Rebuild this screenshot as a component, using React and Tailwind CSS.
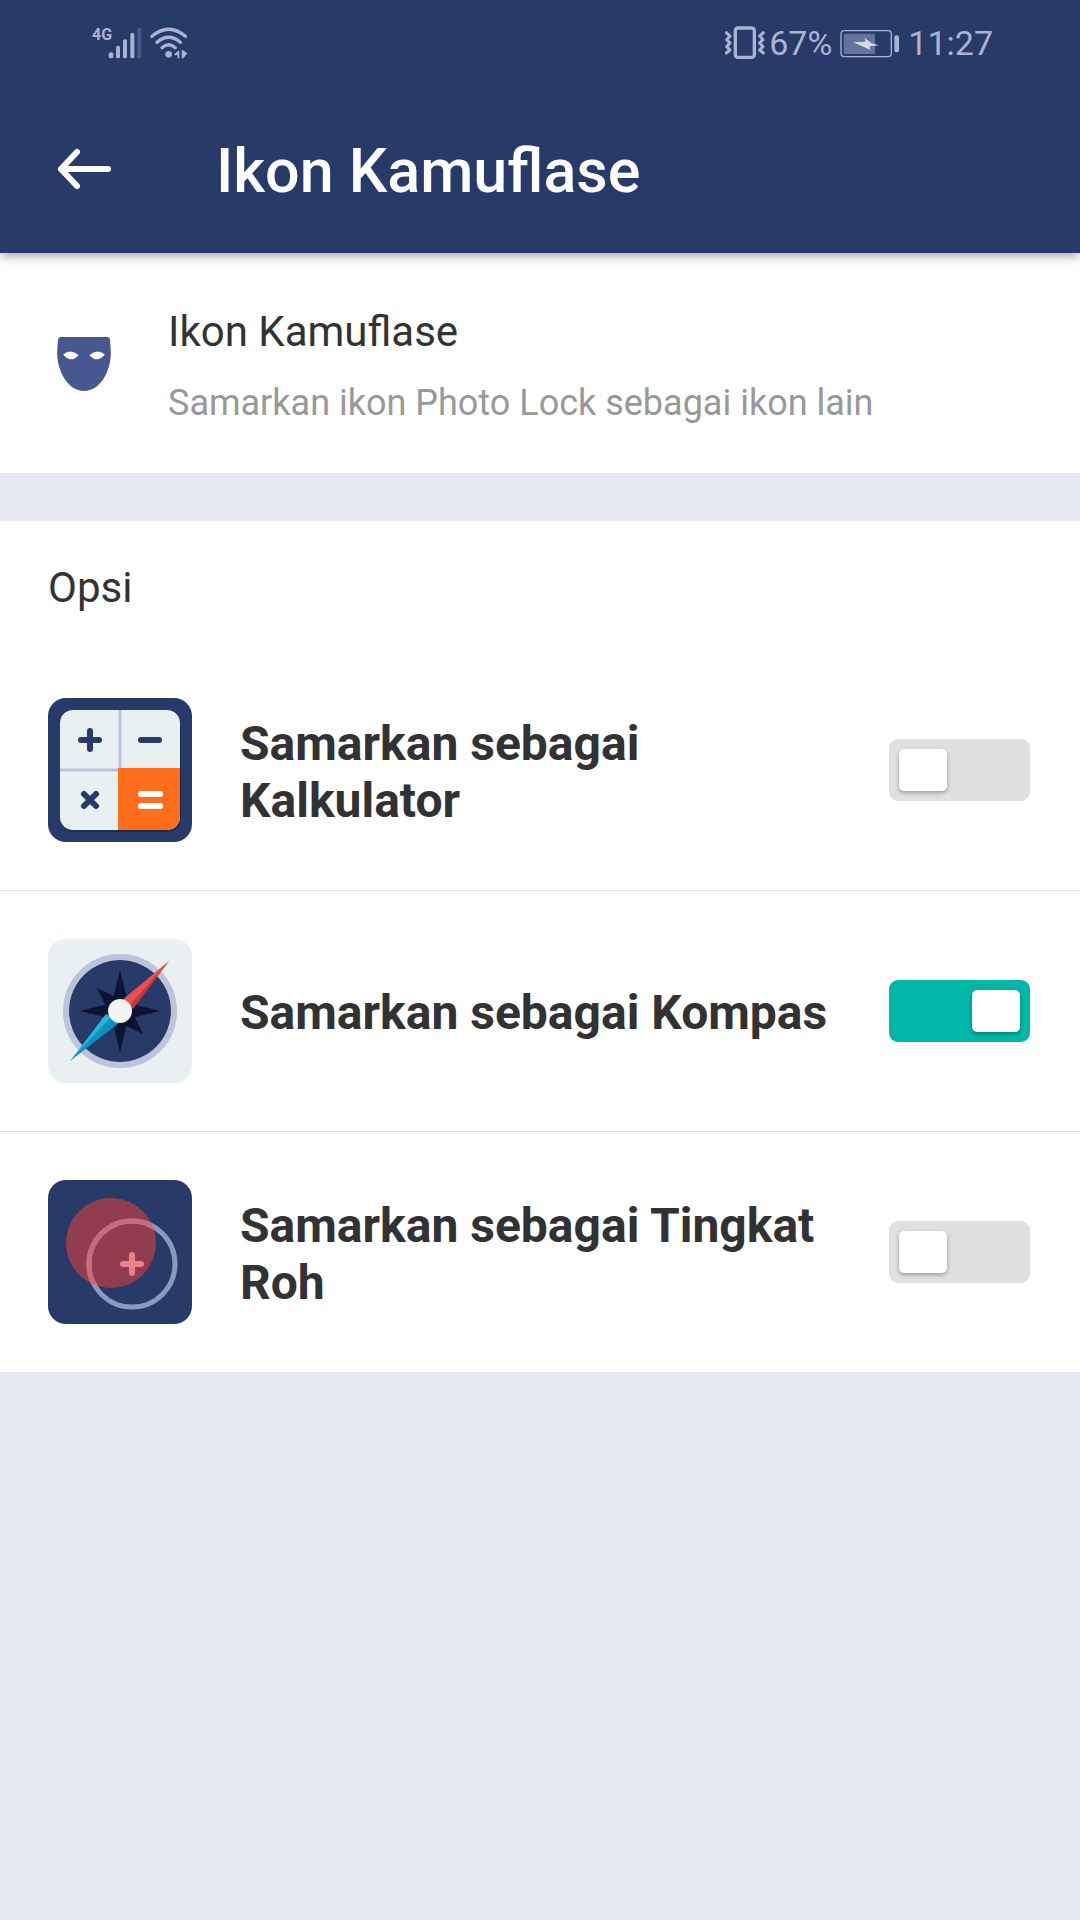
import React, { useState } from 'react';

function SignalIcon() {
  return (
    <svg viewBox="86 48 102 96" className="h-8 w-[34px]" fill="#a9b4d4" aria-hidden="true">
      <rect x="88" y="124" width="14" height="18" rx="6" />
      <rect x="110" y="104" width="12" height="38" rx="5" />
      <rect x="131" y="85" width="12" height="57" rx="5" />
      <rect x="153" y="66" width="12" height="76" rx="5" />
      <rect x="174" y="50" width="12" height="92" rx="4" fill="#475a88" />
    </svg>
  );
}

function WifiIcon() {
  return (
    <svg viewBox="213 48 114 96" className="h-8 w-[38px]" fill="none" stroke="#a9b4d4" aria-hidden="true">
      <g strokeWidth="10" strokeLinecap="round">
        <path d="M219 76 Q269 34 319 76" />
        <path d="M234 94 Q269 64 304 94" />
        <path d="M249 110 Q269 92 289 110" />
      </g>
      <g fill="#a9b4d4" stroke="none">
        <circle cx="269" cy="130" r="10" />
        <path d="M286 130 L297 119 H301 V142 H296 V133 H286 Z" />
        <path d="M308 118 H312 L325 127 L313 142 H308 Z" />
      </g>
    </svg>
  );
}

function VibrateIcon() {
  return (
    <svg viewBox="38 46 123 99" className="h-[33px] w-[41px]" fill="none" stroke="#a9b4d4" aria-hidden="true">
      <rect x="72" y="52" width="57" height="88" rx="8" strokeWidth="10" />
      <g strokeWidth="9" strokeLinejoin="round" strokeLinecap="round">
        <path d="M45 66 L56 76 L46 87 L56 97 L46 108 L56 118 L45 127" />
        <path d="M156 66 L145 76 L155 87 L145 97 L155 108 L145 118 L156 127" />
      </g>
    </svg>
  );
}

function BatteryIcon() {
  return (
    <svg viewBox="391 50 180 90" className="h-[30px] w-[60px]" aria-hidden="true">
      <rect x="394" y="58" width="151" height="78" rx="10" fill="none" stroke="#a9b4d4" strokeWidth="4" />
      <rect x="402" y="67" width="94" height="61" rx="4" fill="#64739b" />
      <rect x="554" y="72" width="14" height="51" rx="6" fill="#a9b4d4" />
      <path d="M430 93 L468 91 L464 79 L486 96 L508 102 L480 105 L482 116 L456 104 Z" fill="#d3daea" />
    </svg>
  );
}

function BackIcon() {
  return (
    <svg
      viewBox="0 0 54 42"
      className="h-[42px] w-[54px]"
      fill="none"
      stroke="#fff"
      strokeWidth="6"
      strokeLinecap="round"
      strokeLinejoin="round"
      aria-hidden="true"
    >
      <path d="M51 21 H4 M20 4 L4 21 L20 38" />
    </svg>
  );
}

function MaskIcon() {
  return (
    <svg viewBox="51 110 162 163" className="size-[54px] shrink-0" aria-hidden="true">
      <path
        d="M62 110 H203 Q209 110 210 117 Q212 133 213 157 C213 215 180 273 132 273 C84 273 51 215 51 157 Q52 133 54 117 Q55 110 62 110 Z"
        fill="#47578f"
      />
      <path d="M69 163 Q92 144 116 165 Q92 191 69 163 Z" fill="#fff" />
      <path d="M195 163 Q172 144 148 165 Q172 191 195 163 Z" fill="#fff" />
    </svg>
  );
}

function CalculatorIcon() {
  return (
    <svg viewBox="0 0 144 144" className="size-36 shrink-0" aria-hidden="true">
      <rect width="144" height="144" rx="18" fill="#273a68" />
      <rect x="13" y="14" width="120" height="120" rx="13" fill="#1b2c54" />
      <rect x="12" y="12" width="120" height="120" rx="13" fill="#e9f0f2" />
      <path d="M72 12 V72 M12 72 H72" stroke="#bcc3db" strokeWidth="3" />
      <path d="M70 70 H132 V119 A13 13 0 0 1 119 132 H70 Z" fill="#ff6e1c" />
      <g stroke="#273a68" strokeWidth="6" strokeLinecap="round">
        <path d="M33 42 H51 M42 33 V51" />
        <path d="M93 42 H111" />
        <path d="M36 96 L48 108 M48 96 L36 108" />
      </g>
      <g stroke="#fff" strokeWidth="6" strokeLinecap="round">
        <path d="M93 96 H112 M93 108 H112" />
      </g>
    </svg>
  );
}

function CompassIcon() {
  return (
    <svg viewBox="0 0 144 144" className="size-36 shrink-0" aria-hidden="true">
      <rect width="144" height="144" rx="18" fill="#e9f0f2" />
      <circle cx="72" cy="72" r="54" fill="none" stroke="#bcc3db" strokeWidth="6" />
      <circle cx="72" cy="72" r="51" fill="#273a68" />
      <g fill="#0b1533">
        <path d="M72 31 L80 64 L112 72 L80 80 L72 113 L64 80 L32 72 L64 64 Z" />
        <path d="M49 49 L76 62 L82 68 L95 95 L68 82 L62 76 Z" />
      </g>
      <path d="M121 22 L73 62 L79 67 Z" fill="#e9504f" />
      <path d="M121 22 L77 65 L85 70 Z" fill="#c2393d" />
      <path d="M121 22 L74 63 L81 67 Z" fill="#e9504f" />
      <path d="M22 122 L58 75 L66 80 Z" fill="#25b4dd" />
      <path d="M22 122 L63 78 L71 84 Z" fill="#0f8fbd" />
      <circle cx="72" cy="72" r="12" fill="#f1f3f5" />
    </svg>
  );
}

function SpiritLevelIcon() {
  return (
    <svg viewBox="0 0 144 144" className="size-36 shrink-0" aria-hidden="true">
      <defs>
        <clipPath id="bubble">
          <circle cx="63" cy="63" r="45" />
        </clipPath>
      </defs>
      <rect width="144" height="144" rx="18" fill="#273a68" />
      <circle cx="63" cy="63" r="45" fill="#923c50" />
      <circle cx="84" cy="84" r="43" fill="none" stroke="#8c99bf" strokeWidth="5" />
      <g clipPath="url(#bubble)">
        <circle cx="84" cy="84" r="43" fill="none" stroke="#cd6a79" strokeWidth="5" />
      </g>
      <path d="M75 84 H93 M84 75 V93" stroke="#ec8189" strokeWidth="6" strokeLinecap="round" />
    </svg>
  );
}

const options = [
  { id: 'kalkulator', label: 'Samarkan sebagai Kalkulator', Icon: CalculatorIcon },
  { id: 'kompas', label: 'Samarkan sebagai Kompas', Icon: CompassIcon },
  { id: 'tingkat-roh', label: 'Samarkan sebagai Tingkat Roh', Icon: SpiritLevelIcon },
];

function StatusBar() {
  return (
    <div className="flex h-[85px] items-center justify-between pr-[87px] pl-[92px] text-[34px] leading-10 text-[#a9b4d4]">
      <div className="flex items-start">
        <span className="w-4 font-['Liberation_Sans_Narrow',Roboto,sans-serif] text-[16px] leading-4 font-bold">4G</span>
        <SignalIcon />
        <span className="w-2" />
        <WifiIcon />
      </div>
      <div className="flex items-center">
        <VibrateIcon />
        <span className="ml-1">67%</span>
        <span className="mx-2 flex">
          <BatteryIcon />
        </span>
        <span>11:27</span>
      </div>
    </div>
  );
}

function OptionRow({ option, checked, onToggle }) {
  const { id, label, Icon } = option;

  return (
    <li className="flex items-center py-12 pr-[50px] pl-12">
      <Icon />
      <label htmlFor={id} className="mr-10 ml-12 flex-1 pt-[3px] text-[48px] leading-[57px] font-bold">
        {label}
      </label>
      <input
        id={id}
        type="checkbox"
        role="switch"
        checked={checked}
        onChange={() => onToggle(id)}
        className="flex h-[62px] w-[141px] shrink-0 cursor-pointer appearance-none items-center rounded-[9px] bg-[#dfe0e2] px-[10px] before:h-[42px] before:w-12 before:rounded-[5px] before:bg-white before:shadow-[0_2px_4px_rgba(0,0,0,0.3)] before:content-[''] checked:justify-end checked:bg-[#00b7a8]"
      />
    </li>
  );
}

function App() {
  const [active, setActive] = useState('kompas');

  // Only one disguise can be on at a time
  const handleToggle = (id) => {
    setActive((current) => (current === id ? null : id));
  };

  return (
    <div className="min-h-screen bg-[#e6e9f2] font-[Roboto,sans-serif] text-[#323234]">
      {/* Header */}
      <header className="relative bg-[#273a68] shadow-[0_3px_10px_rgba(0,0,0,0.35)]">
        <StatusBar />
        <div className="flex h-[168px] items-start px-[57px] pt-[49px]">
          <button type="button" aria-label="Kembali" className="flex h-[70px] items-center">
            <BackIcon />
          </button>
          <h1 className="ml-[105px] text-[61px] leading-[74px] font-medium text-white">Ikon Kamuflase</h1>
        </div>
      </header>

      <main>
        {/* Intro */}
        <section className="flex items-start bg-white px-[57px] pt-[54px] pb-12">
          <div className="flex h-[114px] items-center">
            <MaskIcon />
          </div>
          <div className="ml-[57px]">
            <h2 className="text-[42px] leading-[50px]">Ikon Kamuflase</h2>
            <p className="mt-6 text-[36px] leading-[44px] text-[#98989a]">Samarkan ikon Photo Lock sebagai ikon lain</p>
          </div>
        </section>

        {/* Options */}
        <section className="mt-12 bg-white">
          <h2 className="px-12 pt-[42px] pb-[37px] text-[42px] leading-[50px]">Opsi</h2>
          <ul className="divide-y divide-[#dedfe3]">
            {options.map((option) => (
              <OptionRow key={option.id} option={option} checked={active === option.id} onToggle={handleToggle} />
            ))}
          </ul>
        </section>
      </main>
    </div>
  );
}

export default App;
